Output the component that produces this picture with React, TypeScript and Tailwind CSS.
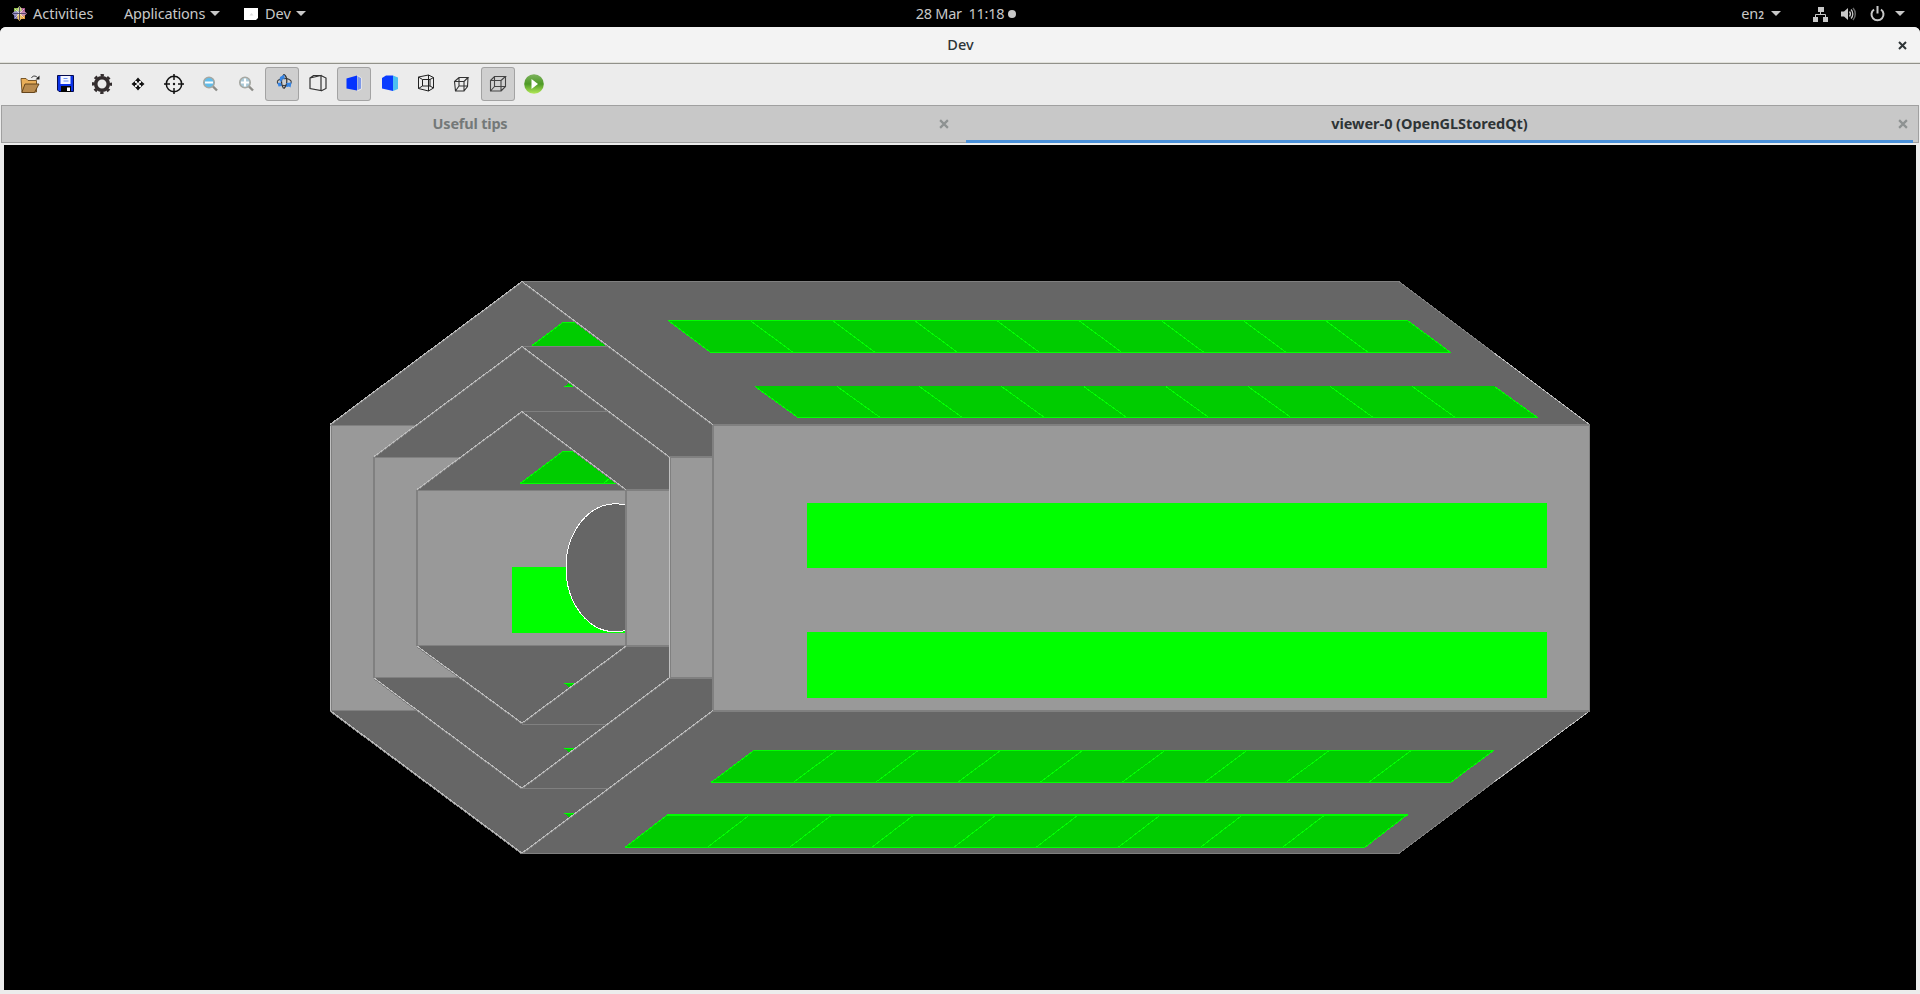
import type { ReactNode } from "react";

type Pt = [number, number];
const pts = (p: Pt[]) => p.map((q) => q.join(",")).join(" ");

function Caret() {
  return (
    <svg width="10" height="5" viewBox="0 0 10 5" className="shrink-0">
      <path d="M0 0h10L5 5z" fill="#c8c8c8" />
    </svg>
  );
}

function TopBar() {
  return (
    <header className="flex h-[27px] items-center bg-black text-[14.5px] text-[#c8c8c8]">
      <div className="flex flex-1 items-center pl-3">
        <svg width="15" height="15" viewBox="0 0 15 15">
          <path d="M2 2h5v5H2z" fill="#8fbf4a" />
          <path d="M8 2h5v5H8z" fill="#a8568f" />
          <path d="M2 8h5v5H2z" fill="#6c68a8" />
          <path d="M8 8h5v5H8z" fill="#e8a23c" />
          <path d="M7.5 0l2.2 2.5v4.500H5.300V2.500z" fill="#c9d98a" />
          <path d="M15 7.500l-2.500 2.200H8V5.300h4.500z" fill="#c88fb0" />
          <path d="M0 7.500l2.500-2.200H7v4.400H2.500z" fill="#9a95c8" />
          <path d="M7.500 15l-2.200-2.500V8h4.400v4.500z" fill="#f0c46a" />
          <path d="M3 3l9 9M12 3l-9 9" stroke="#eee" strokeWidth=".7" />
          <path d="M7.500 1v13M1 7.500h13" stroke="#3b3560" strokeWidth=".8" />
        </svg>
        <span className="ml-[6px] w-[91px]">Activities</span>
        <span className="w-[86px] tracking-[-0.18px]">Applications</span>
        <Caret />
        <svg width="14" height="12" viewBox="0 0 14 12" className="ml-6">
          <path d="M0 0h14v10l-2 2H0z" fill="#fff" />
          <path d="M5.500 7.500h4L7.500 5z" fill="#ddd" />
        </svg>
        <span className="ml-[7px] w-[31px]">Dev</span>
        <Caret />
      </div>
      <div className="flex items-center whitespace-pre pl-[15px]">
        <span className="tracking-[-0.3px]">28 Mar  11:18</span>
        <span className="ml-1 size-2 rounded-full bg-[#c8c8c8]" />
      </div>
      <div className="flex flex-1 items-center justify-end pr-[15px]">
        <span>en</span>
        <span className="pt-[3px] text-[10px] font-semibold">2</span>
        <span className="ml-[7px] flex">
          <Caret />
        </span>
        <svg width="16" height="16" viewBox="0 0 16 16" className="ml-8">
          <path d="M5 1h6v5H5zM0 11h5v5H0zM10 11h5v5h-5z" fill="#c8c8c8" />
          <path d="M2.500 11V8.500h10V11M7.500 5v3.500" fill="none" stroke="#c8c8c8" />
        </svg>
        <svg width="16" height="14" viewBox="0 0 16 14" className="ml-3">
          <path d="M0 4.500h3L7 1v12L3 9.500H0z" fill="#c8c8c8" />
          <path d="M8.500 4.500a4 4 0 0 1 0 5M10 2.500a6.500 6.500 0 0 1 0 9" fill="none" stroke="#c8c8c8" strokeWidth="1.300" />
          <path d="M12 1a9 9 0 0 1 0 12" fill="none" stroke="#666" strokeWidth="1.500" />
        </svg>
        <svg width="15" height="16" viewBox="0 0 15 16" className="ml-[13px]">
          <path d="M4 3.500a6 6 0 1 0 7 0M7.500 0v7.500" fill="none" stroke="#c8c8c8" strokeWidth="2" />
        </svg>
        <span className="ml-[10px] flex">
          <Caret />
        </span>
      </div>
    </header>
  );
}

function Lens({ plus }: { plus?: boolean }) {
  return (
    <>
      <path d="M19.500 19l4.500 4.500" stroke="#8d8d88" strokeWidth="2.400" />
      <circle cx="16" cy="15.500" r="5.300" fill={plus ? "#a9c9d8" : "#62bdea"} stroke="#a6a8a2" strokeWidth="1.500" />
      <path d={plus ? "M12 15.500h8M16 11.500v8" : "M12 15.500h8"} stroke="#fff" strokeWidth="2.200" />
    </>
  );
}

const icons: { on?: boolean; art: ReactNode }[] = [
  {
    art: (
      <>
        <path d="M8 11.500h5l2 2h8.500V25H9z" fill="#e9ae58" stroke="#6b4a1c" strokeWidth=".9" />
        <path d="M12 17h14l-4.500 8.500H8.800z" fill="#b98b4e" stroke="#5b3c14" strokeWidth=".9" />
        <path d="M18.500 11c1-2.500 4-2.500 6-.5" fill="none" stroke="#222" strokeWidth=".9" />
        <path d="M26.500 8.500v4h-4z" fill="#222" />
      </>
    ),
  },
  {
    art: (
      <>
        <path d="M8.500 8.500h16v16H10l-1.500-1.500z" fill="#0a32e6" stroke="#050a50" />
        <path d="M11.500 9h10v8h-10z" fill="#f4f6ff" />
        <path d="M14.500 11.500h4M14.500 14h5" stroke="#6f95f5" />
        <path d="M12 19h10v6H12z" fill="#060606" />
        <path d="M18 20.500h3V24h-3z" fill="#fff" />
      </>
    ),
  },
  {
    art: (
      <>
        <circle cx="17" cy="17" r="6.300" fill="none" stroke="#332d2e" strokeWidth="3.600" />
        <circle cx="17" cy="17" r="8.800" fill="none" stroke="#332d2e" strokeWidth="2.400" strokeDasharray="3.400 3.512" strokeDashoffset="1.700" />
      </>
    ),
  },
  {
    art: (
      <path
        d="M17 10.500l3 3.500h-2v1.500h-2V14h-2zM17 23.500l3-3.500h-2v-1.500h-2V20h-2zM10.500 17l3.500-3v2h1.500v2H14v2zM23.500 17l-3.500-3v2h-1.500v2H20v2z"
        fill="#111"
      />
    ),
  },
  {
    art: (
      <>
        <circle cx="17" cy="17" r="7.700" fill="none" stroke="#111" strokeWidth="1.500" />
        <path d="M17 7v6M17 21v6M7 17h6M21 17h6" stroke="#111" strokeWidth="1.500" />
        <circle cx="17" cy="17" r="1.200" fill="#111" />
      </>
    ),
  },
  { art: <Lens /> },
  { art: <Lens plus /> },
  {
    on: true,
    art: (
      <>
        <ellipse cx="19.300" cy="15" rx="7" ry="3.600" fill="none" stroke="#444" strokeWidth="1.100" />
        <path d="M19 7.500c-3 3-3.500 10-.5 14M19 7.500c3.500 2 4 10 0 14" fill="none" stroke="#333" strokeWidth="1.200" />
        <path d="M15 10l4.500-2.500v5.500l-1.500-1.500c-1 1-1.500 2-1.500 3.500l-2-1z" fill="#3584e4" />
        <path d="M12.500 16l3.500-.5c.5 1.500 0 2.500 1 3.500l-3.500.5zM21 16l5.500-.5-1 5-1.500-1c-1.500.5-2.500.5-3.500 0l1.500-1.500z" fill="#3584e4" />
      </>
    ),
  },
  {
    art: <path d="M9 11l11-2.500V23.500L9 21.500zM20 8.500l5 2.500v10.500l-5 2.500M9 11l3.500-2.500H20" fill="none" stroke="#333" strokeWidth="1.200" />,
  },
  {
    on: true,
    art: (
      <>
        <path d="M9.500 11.500l10.500-3v15l-10.500-2z" fill="#0433ff" />
        <path d="M20.500 9l3.500 2v10.500l-3.500 1.500z" fill="#7d98e8" />
        <path d="M20.500 8.500l4 2.500v11l-4 2" fill="none" stroke="#e8e8ee" strokeWidth=".8" />
      </>
    ),
  },
  {
    art: (
      <>
        <path d="M9 11l4-2.500h7V24l-11-2.500z" fill="#0a3cff" />
        <path d="M20 8.500l5 2V22l-5 2z" fill="#4cc0f0" />
      </>
    ),
  },
  {
    art: (
      <path
        d="M9.500 10l10-2v16l-10-2.500zM19.500 8l5 2.500v10.500l-5 3M9.500 10l4 2.500h7.500l3.500-2M13.500 12.500v6.500l-4 2.500M13.500 19h7.500l3.500 2M21 12.500v6.500"
        fill="none"
        stroke="#222"
        strokeWidth="1"
      />
    ),
  },
  {
    art: (
      <path
        d="M9.500 14.500h9.500v9.500H10.500zM9.500 14.500l4.500-4h9l-4 4M23 10.500l-.5 9-3.500 4.500M14 10.500v8.500h8.500M14 19l-3.500 5"
        fill="none"
        stroke="#333"
        strokeWidth="1.100"
      />
    ),
  },
  {
    on: true,
    art: (
      <path
        d="M9.500 13.500h10.500v10.500H9.500zM9.500 13.500L13.500 9.500H24.500L20 13.500M24.500 9.500V19.500L20 24M13.500 9.500V19.500H24.500M13.500 19.500L9.500 24"
        fill="none"
        stroke="#444"
        strokeWidth="1.100"
      />
    ),
  },
  {
    art: (
      <>
        <defs>
          <linearGradient id="run" x1="0" y1="0" x2="0" y2="1">
            <stop offset="0" stopColor="#7db25e" />
            <stop offset=".5" stopColor="#4e9a26" />
            <stop offset="1" stopColor="#b4ea58" />
          </linearGradient>
        </defs>
        <circle cx="17" cy="17" r="9.800" fill="url(#run)" />
        <path d="M14.500 12l6.500 5-6.500 5z" fill="#fff" />
      </>
    ),
  },
];

function Toolbar() {
  return (
    <div className="flex h-[41px] gap-[2px] bg-[#ececec] pl-[13px] pt-[3px]">
      {icons.map((b, i) => (
        <button
          key={i}
          className={
            b.on
              ? "size-[34px] rounded-[3px] bg-[#cfcfcf] outline-1 -outline-offset-1 outline-[#a3a3a3]"
              : "size-[34px]"
          }
        >
          <svg width="34" height="34" viewBox="0 0 34 34">
            {b.art}
          </svg>
        </button>
      ))}
    </div>
  );
}

function Cross({ color, size }: { color: string; size: number }) {
  return (
    <svg width={size} height={size} viewBox="0 0 9 9" className="shrink-0">
      <path d="M1 1l7 7M8 1l-7 7" stroke={color} strokeWidth="2" />
    </svg>
  );
}

function Tabs() {
  return (
    <div className="mx-px flex h-[38px] border border-[#a0a0a0] bg-[#c8c8c8] text-[14.5px] font-bold">
      <div className="flex w-[964px] items-center pr-[17px] text-[#747878]">
        <span className="flex-1 pr-[1px] text-center tracking-[-0.2px]">Useful tips</span>
        <Cross color="#8e9292" size={10} />
      </div>
      <div className="relative flex flex-1 items-center pr-[10px] text-[#2e3436]">
        <span className="flex-1 pr-[5px] text-center tracking-[-0.04px]">viewer-0 (OpenGLStoredQt)</span>
        <Cross color="#8e9292" size={10} />
        <div className="absolute -bottom-px left-0 right-[5px] h-[3px] bg-[#4a90d9]" />
      </div>
    </div>
  );
}

const STEP = 82.17;

function Band({ top, bottom, y0, y1, thick }: { top: number; bottom: number; y0: number; y1: number; thick?: boolean }) {
  const w = STEP * 9;
  return (
    <g>
      <polygon points={pts([[top, y0], [top + w, y0], [bottom + w, y1], [bottom, y1]])} fill="#00cc00" />
      {Array.from({ length: 10 }, (_, i) => (
        <line key={i} x1={top + STEP * i} y1={y0 + 0.5} x2={bottom + STEP * i} y2={y1 - 0.5} stroke="#00ff00" />
      ))}
      {y0 !== 386 && <rect x={top} y={y0} width={w} height={thick ? 2 : 1} fill="#00ff00" />}
      <rect x={bottom} y={y1 - 1} width={w} height="1" fill="#00ff00" />
    </g>
  );
}

function Diagonals({ lines }: { lines: [number, number, number, number][] }) {
  return (
    <>
      {lines.map(([x1, y1, x2, y2], i) => (
        <g key={i}>
          <line x1={x1} y1={y1 + 1} x2={x2} y2={y2 + 1} stroke="#808080" />
          <line x1={x1} y1={y1} x2={x2} y2={y2} stroke="#bcbcbc" />
        </g>
      ))}
    </>
  );
}

function Scene() {
  return (
    <svg width="1912" height="845" viewBox="4 145 1912 845" className="block bg-black" shapeRendering="crispEdges">
      <polygon points={pts([[522, 281], [1399, 281], [1590, 425], [1590, 711], [1399, 854], [522, 854], [330, 711], [330, 425]])} fill="#666" />
      <path d="M522 281.500H1399M522 853.500H1399" stroke="#808080" />
      <path d="M1399 281.500L1494 353M1494 782L1399 853.500" stroke="#808080" />
      <path d="M1494 353L1589.500 424.500M1589.500 711L1494 782" stroke="#bcbcbc" />

      <rect x="713" y="425" width="877" height="286" fill="#999" />
      <rect x="712" y="424" width="878" height="2" fill="#808080" />
      <rect x="712" y="710" width="878" height="2" fill="#808080" />
      <rect x="1589" y="425" width="1" height="286" fill="#808080" />
      <rect x="807" y="503" width="740" height="65" fill="#0f0" />
      <rect x="807" y="632" width="740" height="66" fill="#0f0" />

      <Band top={668} bottom={711} y0={320} y1={353} />
      <Band top={755} bottom={798} y0={386} y1={418} />
      <Band top={754} bottom={711} y0={750} y1={783} />
      <Band top={668} bottom={625} y0={814} y1={848} thick />

      <polygon points={pts([[330, 425], [416, 425], [374, 457], [374, 678], [416, 711], [330, 711]])} fill="#999" />
      <path d="M330 425.500H416M330 710.500H416M331.500 425V711" stroke="#808080" />
      <path d="M330.500 425V711" stroke="#c0c0c0" />
      <polygon points={pts([[532, 346], [563, 322], [575, 322], [606, 346]])} fill="#0c0" />
      <path d="M532 345.500L563 322.500H575" fill="none" stroke="#0f0" />
      <path d="M522 346.500H608M522 788.500H608" stroke="#808080" />
      <rect x="669" y="457" width="44" height="221" fill="#999" />
      <rect x="669" y="456" width="44" height="2" fill="#808080" />
      <rect x="669" y="677" width="44" height="2" fill="#808080" />

      <polygon points={pts([[374, 457], [460, 457], [417, 490], [417, 646], [460, 678], [374, 678]])} fill="#999" />
      <path d="M374 457.500H460M374 677.500H460" stroke="#808080" />
      <rect x="373" y="457" width="2" height="221" fill="#808080" />
      <path d="M522 411.500H608M522 724.500H608" stroke="#808080" />

      <rect x="417" y="490" width="252" height="156" fill="#999" />
      <path d="M417 490.500H626M417 645.500H626" stroke="#808080" />
      <rect x="626" y="489" width="44" height="2" fill="#808080" />
      <rect x="626" y="645" width="44" height="2" fill="#808080" />
      <rect x="416" y="490" width="2" height="156" fill="#808080" />

      <polygon points={pts([[520, 484], [563, 451], [574, 451], [616, 484]])} fill="#0c0" />
      <path d="M520 483.500L563 451.500H575M520 483.500H616M604 483L610 478" fill="none" stroke="#0f0" />

      <rect x="512" y="567" width="113" height="66" fill="#0f0" />
      <path d="M625 505Q620 503.800 615.300 503.800A49.300 64 0 0 0 615.300 631.800Q620 631.800 625 630.600Z" fill="#666" />
      <path d="M625 505Q620 503.800 615.300 503.800A49.300 64 0 0 0 615.300 631.800Q620 631.800 625 630.600" fill="none" stroke="#fff" />
      <rect x="625" y="490" width="2" height="156" fill="#808080" />
      <rect x="669" y="457" width="1" height="221" fill="#c0c0c0" />
      <rect x="670" y="457" width="1" height="221" fill="#808080" />
      <rect x="712" y="425" width="2" height="286" fill="#808080" />

      <path d="M564 387l5-4 5 4zM564 683h11l-6 5zM564 748h11l-6 5zM564 813h11l-6 5z" fill="#0c0" />
      <path d="M564 386.500h10M564 683.500h11M564 748.500h11M564 813.500h11" stroke="#0f0" />

      <Diagonals
        lines={[
          [330, 424.5, 522, 281.5],
          [522, 281.5, 713, 424.5],
          [374, 456.5, 522, 346.5],
          [522, 346.5, 669, 456.5],
          [417, 489.5, 522, 411.5],
          [522, 411.5, 626, 489.5],
          [330, 710.5, 522, 853],
          [522, 853, 713, 710.5],
          [374, 678, 522, 788],
          [522, 788, 669, 678],
          [417, 646, 522, 723],
          [522, 723, 626, 646],
        ]}
      />
    </svg>
  );
}

export default function App() {
  return (
    <div className="flex h-[994px] w-[1920px] flex-col overflow-hidden bg-black font-['Noto_Sans',sans-serif]">
      <TopBar />
      <div className="flex flex-1 flex-col overflow-hidden rounded-t-[6px] bg-[#ececec]">
        <div className="flex h-[37px] items-center border-b border-[#91918a] bg-[#f3f3f3] pr-[13px] shadow-[inset_0_-1px_0_#e0e0da]">
          <span className="flex-1 pl-[23px] text-center text-[14.5px] font-medium text-[#2e3436]">Dev</span>
          <Cross color="#2e3436" size={9} />
        </div>
        <Toolbar />
        <Tabs />
        <div className="px-1 pt-[2px]">
          <Scene />
        </div>
      </div>
    </div>
  );
}
